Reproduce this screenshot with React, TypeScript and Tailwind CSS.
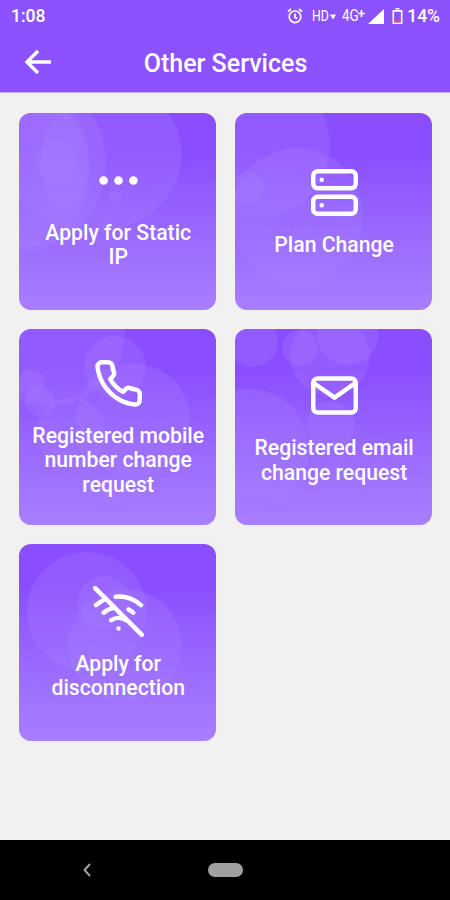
import type { ComponentType } from 'react';
import { FiMail, FiMoreHorizontal, FiPhone, FiServer, FiWifiOff } from 'react-icons/fi';

interface Bubble {
  x: number;
  y: number;
  r: number;
  ry?: number;
}

interface Service {
  name: string;
  icon: ComponentType<{ className?: string }>;
  bubbles: Bubble[];
}

const services: Service[] = [
  {
    name: 'Apply for Static\nIP',
    icon: FiMoreHorizontal,
    bubbles: [
      { x: 73, y: 42, r: 90, ry: 78 },
      { x: 14, y: 50, r: 73, ry: 84 },
      { x: 5, y: 60, r: 66, ry: 80 },
      { x: 46, y: 48, r: 24, ry: 50 },
      { x: 38, y: 48, r: 20, ry: 24 },
      { x: 96, y: 84, r: 6 },
    ],
  },
  {
    name: 'Plan Change',
    icon: FiServer,
    bubbles: [
      { x: 22, y: 32, r: 73 },
      { x: 62, y: 103, r: 66, ry: 68 },
      { x: 12, y: 76, r: 17 },
    ],
  },
  {
    name: 'Registered mobile\nnumber change\nrequest',
    icon: FiPhone,
    bubbles: [
      { x: 28, y: 5, r: 78, ry: 72 },
      { x: 96, y: 38, r: 31 },
      { x: 114, y: 91, r: 57 },
      { x: 12, y: 53, r: 13 },
      { x: 21, y: 72, r: 15 },
      { x: 52, y: 104, r: 35 },
    ],
  },
  {
    name: 'Registered email\nchange request',
    icon: FiMail,
    bubbles: [
      { x: 18, y: 13, r: 25 },
      { x: 65, y: 19, r: 18 },
      { x: 113, y: 5, r: 31 },
      { x: 95, y: 27, r: 40 },
      { x: 14, y: 120, r: 60 },
      { x: 96, y: 96, r: 24 },
    ],
  },
  {
    name: 'Apply for\ndisconnection',
    icon: FiWifiOff,
    bubbles: [
      { x: 68, y: 68, r: 60 },
      { x: 106, y: 102, r: 57 },
      { x: 86, y: 59, r: 27 },
    ],
  },
];

function StatusBar() {
  return (
    <div className="flex h-8 items-center justify-between pl-[11px] pr-2.5 text-[17px] font-medium leading-8">
      <span className="text-[17.5px]">1:08</span>
      <div className="flex items-center">
        <svg viewBox="0 0 16 16" className="h-4 w-4" fill="none" stroke="currentColor" strokeWidth="1.7">
          <circle cx="8" cy="8.8" r="5.8" />
          <path d="M8 5.5v3.7l2.3 1.5M.9 3.6 4 1M15.1 3.6 12 1" />
        </svg>
        <span className="ml-[9px] w-4 origin-left scale-x-[0.82] text-[15px] font-normal">HD</span>
        <svg viewBox="0 0 6 6" className="ml-[2px] mt-0.5 h-1.5 w-1.5" fill="currentColor">
          <path d="M0 .5h6L3 5.5z" />
        </svg>
        <span className="ml-[6px] w-[16px] origin-left scale-x-[0.84] text-[16px] font-normal">4G</span>
        <svg viewBox="0 0 7 7" className="-mt-1.5 h-[7px] w-[7px]" stroke="currentColor" strokeWidth="1.7">
          <path d="M0 3.5h7M3.5 0v7" />
        </svg>
        <svg viewBox="0 0 16 15" className="ml-[3px] h-[15px] w-4" fill="currentColor">
          <path d="M16 0v15H0z" />
        </svg>
        <svg viewBox="0 0 11 16" className="ml-2 h-4 w-[11px]">
          <path d="M3.5 .8h4M1.3 2.9h8.4v12.3H1.3z" fill="none" stroke="currentColor" strokeWidth="1.6" />
          <path d="M2.1 12.2h6.8v2.2H2.1z" fill="#e2565f" />
        </svg>
        <span className="ml-1 text-[17.5px]">14%</span>
      </div>
    </div>
  );
}

function Header() {
  return (
    <header className="h-[93px] border-b border-[#c9b0fc] bg-[#8c52ff] text-white">
      <StatusBar />
      <div className="grid h-[62px] grid-cols-[1fr_auto_1fr] items-center">
        <svg
          viewBox="0 0 28 26"
          className="ml-[23px] h-[26px] w-7"
          fill="none"
          stroke="currentColor"
          strokeWidth="3.4"
        >
          <path d="M15 1 4 12l11 11M4 12h24" />
        </svg>
        <h1 className="pl-px pt-0.5 text-[25px] font-medium">Other Services</h1>
      </div>
    </header>
  );
}

function ServiceCard({ name, icon: Icon, bubbles }: Service) {
  return (
    <button className="relative flex h-[196.5px] flex-col items-center justify-center overflow-hidden rounded-xl bg-linear-to-b from-[#8a4dff] from-20% to-[#a97fff] pl-px pt-[1.5px] text-white">
      <svg viewBox="0 0 197 197" className="absolute inset-0 h-full w-full" fill="#aa80ff" fillOpacity="0.27">
        {bubbles.map((b, i) => (
          <ellipse key={i} cx={b.x} cy={b.y} rx={b.r} ry={b.ry ?? b.r} />
        ))}
      </svg>
      <Icon className="relative h-[51px] w-[51px] stroke-[2.1]" />
      <span className="relative mt-[15px] whitespace-pre text-[21.2px] font-medium leading-[24.5px]">
        {name}
      </span>
    </button>
  );
}

export default function App() {
  return (
    <div className="flex h-[900px] w-[450px] flex-col bg-[#f1f1f1] font-['Roboto',sans-serif]">
      <Header />
      <main className="flex-1 pl-[19.4px] pt-5">
        <div className="grid grid-cols-[196.7px_196.7px] gap-[19.2px]">
          {services.map((service) => (
            <ServiceCard key={service.name} {...service} />
          ))}
        </div>
      </main>
      <nav className="flex h-[60px] items-center bg-black text-[#a0a0a0]">
        <svg
          viewBox="0 0 8 14"
          className="ml-[83px] h-3.5 w-2"
          fill="none"
          stroke="currentColor"
          strokeWidth="2"
        >
          <path d="M7 1 1.5 7 7 13" />
        </svg>
        <span className="ml-[117px] h-3.5 w-[35px] rounded-full bg-[#a0a0a0]" />
      </nav>
    </div>
  );
}
